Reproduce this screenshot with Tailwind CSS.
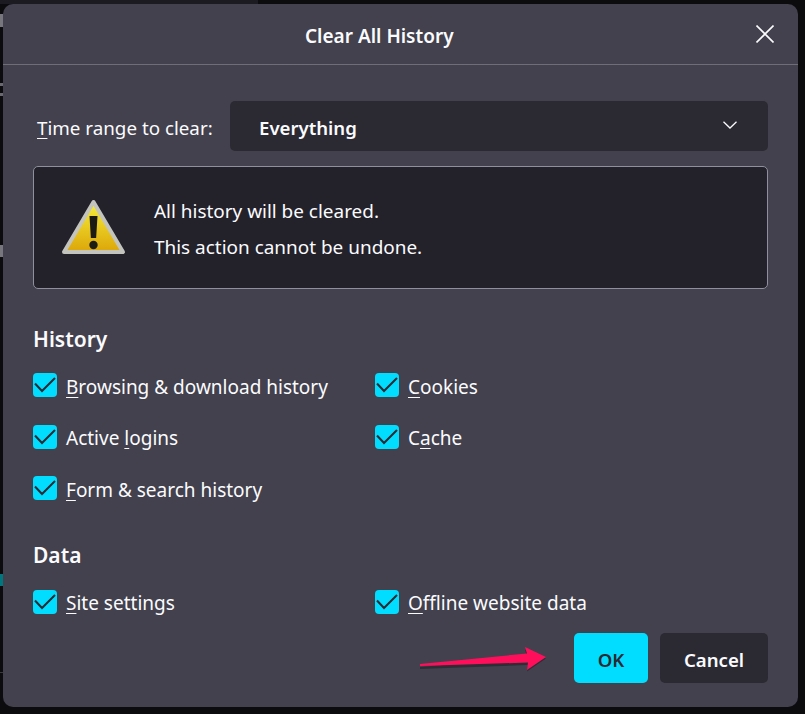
<!DOCTYPE html>
<html><head><meta charset="utf-8">
<script src="https://cdn.jsdelivr.net/npm/@tailwindcss/browser@4"></script>
</head>
<body class="bg-[#0c0c0f] w-[805px] h-[714px] overflow-hidden font-['Noto_Sans',sans-serif] text-[#fbfbfe] relative">
<div class="absolute left-0 top-0 w-[258px] h-[4px] bg-[#1c1b22]"></div>
<div class="absolute left-0 top-[14px] w-[3px] h-[13px] bg-[#77767c]"></div>
<div class="absolute left-0 top-[83px] w-[3px] h-[3px] bg-[#6a6970]"></div>
<div class="absolute left-0 top-[93px] w-[3px] h-[3px] bg-[#6a6970]"></div>
<div class="absolute left-0 top-[245px] w-[3px] h-[12px] bg-[#77767c]"></div>
<div class="absolute left-0 top-[574px] w-[3px] h-[12px] bg-[#00767f]"></div>
<div class="absolute left-0 top-[672px] w-[3px] h-px bg-[#3a3940]"></div>
<main class="absolute left-[3px] top-[4px] w-[795px] h-[703px] rounded-[10px] bg-[#42414d] flex flex-col">
  <header class="h-[61px] shrink-0 border-b border-[#6f6e78] relative flex items-center pl-[302px] pt-[4px]">
    <h1 class="text-[19px] font-semibold leading-none">Clear All History</h1>
    <svg class="absolute left-[753px] top-[21px] w-[18px] h-[18px]" viewBox="0 0 18 18" fill="none" stroke="#fbfbfe" stroke-width="1.6"><path d="M.5.5l17 17M17.500.5l-17 17"/></svg>
  </header>
  <section class="px-[30px] pt-[36px] flex flex-col">
    <div class="flex items-center h-[50px]">
      <label class="pl-[4px] w-[197px] text-[18.800px] pt-[4px]"><span class="underline underline-offset-[3px]">T</span>ime range to clear:</label>
      <div class="flex-1 h-full rounded-[5px] bg-[#2b2a33] flex items-center justify-between pl-[29px] pr-[31px]">
        <span class="text-[18.600px] font-semibold pt-[4px]">Everything</span>
        <svg class="w-[14px] h-[8px] -mt-[2px]" viewBox="0 0 14 8" fill="none" stroke="#fbfbfe" stroke-width="1.3"><path d="M.5.800 7 7 13.500.800"/></svg>
      </div>
    </div>
    <div class="mt-[15px] h-[123px] rounded-[5px] border border-[#8f8f9d] bg-[#23222b] flex items-center pl-[28px]">
      <svg class="w-[64px] h-[58px] shrink-0" viewBox="0 0 64 58">
        <defs><linearGradient id="y" x1="0" y1="0" x2="0" y2="1"><stop offset="0" stop-color="#f6f03a"/><stop offset="1" stop-color="#dca509"/></linearGradient></defs>
        <path d="M31.500 3 61 53H2Z" fill="url(#y)" stroke="#c4c4be" stroke-width="4" stroke-linejoin="round"/>
        <path d="M27.500 17h8l-1.400 22h-5.200Z" fill="#1d1c14"/>
        <circle cx="31.500" cy="46" r="4.200" fill="#1d1c14"/>
      </svg>
      <div class="ml-[28px] text-[18.950px] flex flex-col gap-[10px] leading-[26px] mt-[2px]">
        <p>All history will be cleared.</p>
        <p>This action cannot be undone.</p>
      </div>
    </div>
    <h2 class="mt-[36px] text-[21px] font-semibold leading-[28px]">History</h2>
    <div class="mt-[20px] grid grid-cols-[342px_1fr] gap-y-[27.500px] text-[19px]">
      <div class="flex items-center gap-[9px] h-[24px]"><span class="size-[24px] shrink-0 rounded-[4px] bg-[#00ddff] flex items-center justify-center"><svg class="w-[22px] h-[16px]" viewBox="0 0 22 16" fill="none" stroke="#2b2a33" stroke-width="2"><path d="M1 6.500 8 14 21 1"/></svg></span><span class="pt-[4px]"><span class="underline underline-offset-[3px]">B</span>rowsing &amp; download history</span></div>
      <div class="flex items-center gap-[9px] h-[24px]"><span class="size-[24px] shrink-0 rounded-[4px] bg-[#00ddff] flex items-center justify-center"><svg class="w-[22px] h-[16px]" viewBox="0 0 22 16" fill="none" stroke="#2b2a33" stroke-width="2"><path d="M1 6.500 8 14 21 1"/></svg></span><span class="pt-[4px]"><span class="underline underline-offset-[3px]">C</span>ookies</span></div>
      <div class="flex items-center gap-[9px] h-[24px]"><span class="size-[24px] shrink-0 rounded-[4px] bg-[#00ddff] flex items-center justify-center"><svg class="w-[22px] h-[16px]" viewBox="0 0 22 16" fill="none" stroke="#2b2a33" stroke-width="2"><path d="M1 6.500 8 14 21 1"/></svg></span><span class="pt-[4px]">Active <span class="underline underline-offset-[3px]">l</span>ogins</span></div>
      <div class="flex items-center gap-[9px] h-[24px]"><span class="size-[24px] shrink-0 rounded-[4px] bg-[#00ddff] flex items-center justify-center"><svg class="w-[22px] h-[16px]" viewBox="0 0 22 16" fill="none" stroke="#2b2a33" stroke-width="2"><path d="M1 6.500 8 14 21 1"/></svg></span><span class="pt-[4px]">C<span class="underline underline-offset-[3px]">a</span>che</span></div>
      <div class="flex items-center gap-[9px] h-[24px]"><span class="size-[24px] shrink-0 rounded-[4px] bg-[#00ddff] flex items-center justify-center"><svg class="w-[22px] h-[16px]" viewBox="0 0 22 16" fill="none" stroke="#2b2a33" stroke-width="2"><path d="M1 6.500 8 14 21 1"/></svg></span><span class="pt-[4px]"><span class="underline underline-offset-[3px]">F</span>orm &amp; search history</span></div>
    </div>
    <h2 class="mt-[41px] text-[21px] font-semibold leading-[28px]">Data</h2>
    <div class="mt-[21px] grid grid-cols-[342px_1fr] text-[19px]">
      <div class="flex items-center gap-[9px] h-[24px]"><span class="size-[24px] shrink-0 rounded-[4px] bg-[#00ddff] flex items-center justify-center"><svg class="w-[22px] h-[16px]" viewBox="0 0 22 16" fill="none" stroke="#2b2a33" stroke-width="2"><path d="M1 6.500 8 14 21 1"/></svg></span><span class="pt-[2px]"><span class="underline underline-offset-[3px]">S</span>ite settings</span></div>
      <div class="flex items-center gap-[9px] h-[24px]"><span class="size-[24px] shrink-0 rounded-[4px] bg-[#00ddff] flex items-center justify-center"><svg class="w-[22px] h-[16px]" viewBox="0 0 22 16" fill="none" stroke="#2b2a33" stroke-width="2"><path d="M1 6.500 8 14 21 1"/></svg></span><span class="pt-[2px]"><span class="underline underline-offset-[3px]">O</span>ffline website data</span></div>
    </div>
    <div class="mt-[19px] flex justify-end gap-[12px] text-[18.600px] font-semibold">
      <button class="w-[74px] h-[50px] pt-[4px] rounded-[5px] bg-[#00ddff] text-[#2b2a33]">OK</button>
      <button class="w-[108px] h-[50px] pt-[4px] rounded-[5px] bg-[#2b2a33]">Cancel</button>
    </div>
  </section>
</main>
<svg class="absolute left-[415px] top-[645px] w-[135px] h-[30px]" viewBox="0 0 135 30"><path d="M5 20.500 112 11 110 3 131 12 112 25 113 18.500 5 22.500Z" fill="#000" opacity=".3" transform="translate(0 1.500)"/><path d="M5 19 112 8.500 110 2 131 12 112 25 113 17.500 5 21Z" fill="#ff0f5b"/></svg>
</body></html>
